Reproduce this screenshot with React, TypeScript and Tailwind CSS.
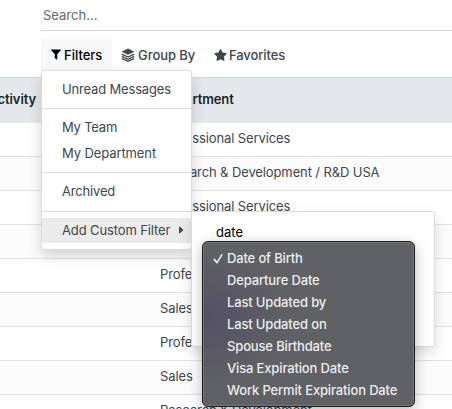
import React from "react";
import { FaFilter, FaStar, FaCaretRight } from "react-icons/fa";

const rows = [
  "Professional Services",
  "Research & Development / R&D USA",
  "Professional Services",
  "Sales",
  "Professional Services",
  "Sales",
  "Professional Services",
  "Sales",
  "Research & Development",
];

const options = [
  "Date of Birth",
  "Departure Date",
  "Last Updated by",
  "Last Updated on",
  "Spouse Birthdate",
  "Visa Expiration Date",
  "Work Permit Expiration Date",
];

function LayersIcon() {
  return (
    <svg viewBox="0 0 14 14" className="h-[14px] w-[14px]" fill="currentColor">
      <path d="M7 .6 13.4 3.7 7 6.8.6 3.7Z" />
      <path
        d="M.8 6.1 7 9l6.2-2.9M.8 8.4 7 11.3l6.2-2.9M.8 10.6 7 13.3l6.2-2.7"
        fill="none"
        stroke="currentColor"
        strokeWidth="1.3"
      />
    </svg>
  );
}

function OptionsPopup() {
  return (
    <div className="absolute top-[29px] left-[10px] h-[166px] w-[213px] rounded-[6px] border border-[#1d1d20] bg-[#606165] bg-[radial-gradient(ellipse_90px_70px_at_0px_75px,#535064,#606165)] pt-[5px] tracking-[-0.15px] text-[#ececed] shadow-[inset_0_0_0_1px_#77787b,0_4px_14px_rgba(0,0,0,0.28)]">
      {options.map((option, i) => (
        <div key={option} className="flex h-[22px] items-center pl-[10px] font-medium">
          <span className="flex w-[14px] shrink-0">
            {i === 0 && (
              <svg viewBox="0 0 10 11" className="h-[11px] w-[10px]" fill="none" stroke="currentColor" strokeWidth="1.6" strokeLinecap="round" strokeLinejoin="round">
                <path d="M1.2 6.4 4 9.6 8.8 1.8" />
              </svg>
            )}
          </span>
          <span className="whitespace-nowrap">{option}</span>
        </div>
      ))}
    </div>
  );
}

function FilterMenu() {
  return (
    <div className="absolute top-[70px] left-[41px] h-[180px] w-[151px] rounded-[3px] border border-[#d8dde1] bg-white pt-[6px] tracking-[-0.17px] whitespace-nowrap shadow-[0_6px_14px_rgba(0,0,0,0.16)]">
      <div className="flex h-[26px] items-center pb-[2px] pl-[20px]">Unread Messages</div>
      <div className="mt-[5px] mb-[6px] h-px bg-[#d8dde1]" />
      <div className="flex h-[26px] items-center pb-[2px] pl-[20px] tracking-[-0.2px]">My Team</div>
      <div className="flex h-[26px] items-center pb-[2px] pl-[20px] tracking-[-0.1px]">My Department</div>
      <div className="mt-[5px] mb-[6px] h-px bg-[#d8dde1]" />
      <div className="flex h-[26px] items-center pb-[2px] pl-[20px]">Archived</div>
      <div className="mt-[6px] mb-[6px] h-px bg-[#d8dde1]" />
      <div className="flex h-[25px] items-center bg-[#ebebeb] pb-[2px] pl-[20px]">
        <span className="w-[117px] tracking-[-0.12px]">Add Custom Filter</span>
        <FaCaretRight className="h-[12px] w-[5px]" preserveAspectRatio="none" />
      </div>
      <div className="absolute top-[140px] left-[149px] h-[136px] w-[244px] rounded-[3px] border border-[#d8dde1] bg-white shadow-[0_6px_14px_rgba(0,0,0,0.14)]">
        <div className="mt-[11px] ml-[24px] tracking-normal text-black">date</div>
        <OptionsPopup />
      </div>
    </div>
  );
}

export default function App() {
  return (
    <div className="relative h-[409px] w-[452px] overflow-hidden bg-white font-['Inter','Liberation_Sans',sans-serif] text-[13px] leading-[18px] text-[#41464c]">
      <div className="ml-[41px] h-[31px] border-b border-[#d3d9de] pt-[6px] pl-[2px] text-[#62686e]">Search...</div>
      <div className="mt-[8px] ml-[41px] flex h-[38px] items-start font-medium">
        <div className="flex h-[31px] w-[71px] items-center rounded-t-[3px] bg-[#f7f8f9] pl-[10px] text-black">
          <FaFilter className="mr-[3px] h-[11px] w-[10px]" />
          Filters
        </div>
        <div className="flex h-[31px] w-[91px] items-center pl-[9px]">
          <LayersIcon />
          <span className="ml-[3px] tracking-[-0.05px]">Group By</span>
        </div>
        <div className="flex h-[31px] items-center pl-[11px]">
          <FaStar className="mr-[2px] h-[12px] w-[13px]" />
          <span className="tracking-[-0.1px]">Favorites</span>
        </div>
      </div>
      <div className="flex h-[46px] items-center border-t border-[#d3d9de] bg-[#e5e8eb] pb-[3px] font-semibold tracking-[-0.1px] text-[#212529]">
        <div className="flex w-[36px] justify-end">Activity</div>
        <div className="ml-[124px]">Department</div>
      </div>
      {rows.map((row, i) => (
        <div key={i} className="flex h-[34px] items-center border-b border-[#dfe2e5] pb-[3px] pl-[160px] tracking-[-0.11px] whitespace-nowrap odd:bg-[#fcfcfc] even:bg-white">
          {row}
        </div>
      ))}
      <FilterMenu />
    </div>
  );
}
